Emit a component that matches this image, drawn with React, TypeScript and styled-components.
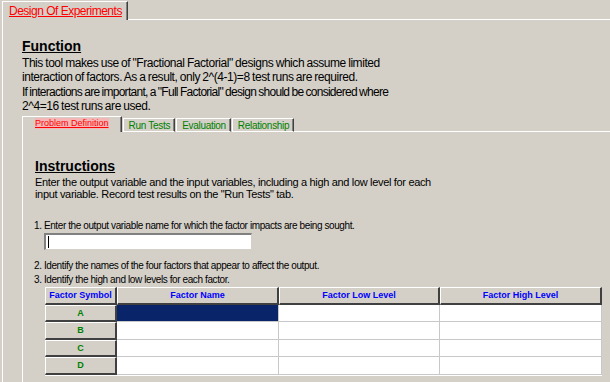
import { FC, Fragment } from 'react'
import styled, { createGlobalStyle } from 'styled-components'

const face = '#d4d0c8'
const shadow = '#808080'
const dark = '#404040'

const GlobalStyle = createGlobalStyle`
    html, body {
        margin: 0;
        padding: 0;
        background: ${face};
        font-family: "Liberation Sans", Arial, sans-serif;
    }
`

const Window = styled.div`
    width: 610px;
    height: 382px;
    overflow: hidden;
    display: flex;
    flex-direction: column;
    background: ${face};
    color: #000;
`

const TabStrip = styled.div<{ $height: number }>`
    display: flex;
    align-items: flex-end;
    height: ${props => props.$height}px;
    flex-shrink: 0;
`

interface iTab {
    $active?: boolean;
}

const OuterTab = styled.div`
    margin-left: 2px;
    height: 18px;
    padding: 0 5px 0 6px;
    border-top: 1px solid #fff;
    border-left: 1px solid #fff;
    border-right: 1px solid ${dark};
    box-shadow: inset -1px 0 ${shadow};
    display: flex;
    align-items: center;
    font-size: 12px;
    letter-spacing: -0.5px;
    color: #ff0000;
    text-decoration: underline;
`

const InnerTab = styled.div<iTab>`
    height: ${props => props.$active ? 15 : 12}px;
    padding: ${props => props.$active ? '0 12px' : '0 4px 0 5px'};
    border-top: 1px solid #fff;
    border-left: 1px solid #fff;
    border-right: 1px solid ${dark};
    border-bottom: ${props => props.$active ? 'none' : '1px solid #fff'};
    box-shadow: inset -1px 0 ${shadow};
    display: flex;
    align-items: ${props => props.$active ? 'flex-start' : 'center'};
    font-size: ${props => props.$active ? 9 : 10}px;
    letter-spacing: ${props => props.$active ? 0 : -0.3}px;
    color: ${props => props.$active ? '#ff0000' : '#008000'};
    text-decoration: ${props => props.$active ? 'underline' : 'none'};
    margin-left: ${props => props.$active ? 0 : 1}px;
`

const TabLabel = styled.span<iTab>`
    background: ${props => props.$active ? '#f4b6b6' : 'transparent'};
    line-height: 11px;
    margin-top: ${props => props.$active ? 1 : 0}px;
`

const StripFill = styled.div`
    flex: 1;
    border-bottom: 1px solid #fff;
`

const OuterPanel = styled.div`
    flex: 1;
    margin-left: 2px;
    border-left: 1px solid #fff;
    padding: 18px 0 0 19px;
    display: flex;
    flex-direction: column;
`

const Heading = styled.h2`
    margin: 0;
    font-size: 14px;
    line-height: 16px;
    font-weight: bold;
    text-decoration: underline;
`

const Body = styled.p<{ $gap?: number }>`
    margin: ${props => props.$gap ?? 0}px 0 0;
    font-size: 12px;
    line-height: 14px;
    letter-spacing: -0.45px;
    word-spacing: -0.5px;
`

const Tight = styled.span`
    letter-spacing: -0.72px;
`

const InnerArea = styled.div`
    margin-top: 4px;
    display: flex;
    flex-direction: column;
    flex: 1;
`

const InnerPanel = styled.div`
    flex: 1;
    border-left: 1px solid #fff;
    padding: 26px 0 0 12px;
    display: flex;
    flex-direction: column;
`

const SmallText = styled.p<{ $gap?: number }>`
    margin: ${props => props.$gap ?? 0}px 0 0;
    font-size: 11px;
    line-height: 12px;
    letter-spacing: -0.33px;
`

const StepText = styled.p<{ $gap?: number }>`
    margin: ${props => props.$gap ?? 0}px 0 0 -1px;
    font-size: 10px;
    line-height: 14px;
    letter-spacing: -0.4px;
`

const TextInput = styled.div`
    margin: 0 0 0 9px;
    width: 203px;
    height: 14px;
    background: #fff;
    border-top: 2px solid ${shadow};
    border-left: 2px solid ${shadow};
    border-bottom: 1px solid ${face};
    border-right: 1px solid ${face};
    display: flex;
    align-items: center;
    padding-left: 2px;
`

const Caret = styled.div`
    width: 1px;
    height: 12px;
    background: #000;
`

const Grid = styled.div`
    margin: 0 0 0 10px;
    display: grid;
    grid-template-columns: 72px 162px 161px 162px;
    grid-auto-rows: 17.5px;
    width: 557px;
    border-bottom: 1px solid #fff;
`

const HeadCell = styled.div<{ $color: string }>`
    box-sizing: border-box;
    background: ${face};
    border-top: 1px solid #fff;
    border-left: 1px solid #fff;
    border-right: 2px solid ${dark};
    border-bottom: 2px solid ${dark};
    display: flex;
    align-items: center;
    justify-content: center;
    font-size: 9px;
    font-weight: bold;
    color: ${props => props.$color};
`

const DataCell = styled.div<{ $selected?: boolean }>`
    box-sizing: border-box;
    background: ${props => props.$selected ? '#0a246a' : '#fff'};
    border-right: 1px solid #c8c8c8;
    border-bottom: 1px solid #c8c8c8;
`

const symbols = ['A', 'B', 'C', 'D']
const headers = ['Factor Name', 'Factor Low Level', 'Factor High Level']

const App: FC = () => {
    return (
        <Window>
            <GlobalStyle />
            <TabStrip $height={20}>
                <OuterTab>Design Of Experiments</OuterTab>
                <StripFill />
            </TabStrip>
            <OuterPanel>
                <Heading>Function</Heading>
                <Body $gap={2}>
                    This tool makes use of "Fractional Factorial" designs which assume limited<br />
                    interaction of factors. As a result, only 2^(4-1)=8 test runs are required.
                </Body>
                <Body $gap={1}>
                    <Tight>If interactions are important, a "Full Factorial" design should be considered where</Tight><br />
                    2^4=16 test runs are used.
                </Body>
                <InnerArea>
                    <TabStrip $height={15}>
                        <InnerTab $active><TabLabel $active>Problem Definition</TabLabel></InnerTab>
                        <InnerTab><TabLabel>Run Tests</TabLabel></InnerTab>
                        <InnerTab><TabLabel>Evaluation</TabLabel></InnerTab>
                        <InnerTab><TabLabel>Relationship</TabLabel></InnerTab>
                        <StripFill />
                    </TabStrip>
                    <InnerPanel>
                        <Heading>Instructions</Heading>
                        <SmallText $gap={2}>
                            Enter the output variable and the input variables, including a high and low level for each<br />
                            input variable. Record test results on the "Run Tests" tab.
                        </SmallText>
                        <StepText $gap={19}>
                            1. Enter the output variable name for which the factor impacts are being sought.
                        </StepText>
                        <TextInput><Caret /></TextInput>
                        <StepText $gap={9}>
                            2. Identify the names of the four factors that appear to affect the output.
                        </StepText>
                        <StepText>3. Identify the high and low levels for each factor.</StepText>
                        <Grid>
                            <HeadCell $color="#0000ff">Factor Symbol</HeadCell>
                            {headers.map(h => (
                                <HeadCell key={h} $color="#0000ff">{h}</HeadCell>
                            ))}
                            {symbols.map((s, i) => (
                                <Fragment key={s}>
                                    <HeadCell $color="#008000">{s}</HeadCell>
                                    <DataCell $selected={i === 0} />
                                    <DataCell />
                                    <DataCell />
                                </Fragment>
                            ))}
                        </Grid>
                    </InnerPanel>
                </InnerArea>
            </OuterPanel>
        </Window>
    )
}

export default App
